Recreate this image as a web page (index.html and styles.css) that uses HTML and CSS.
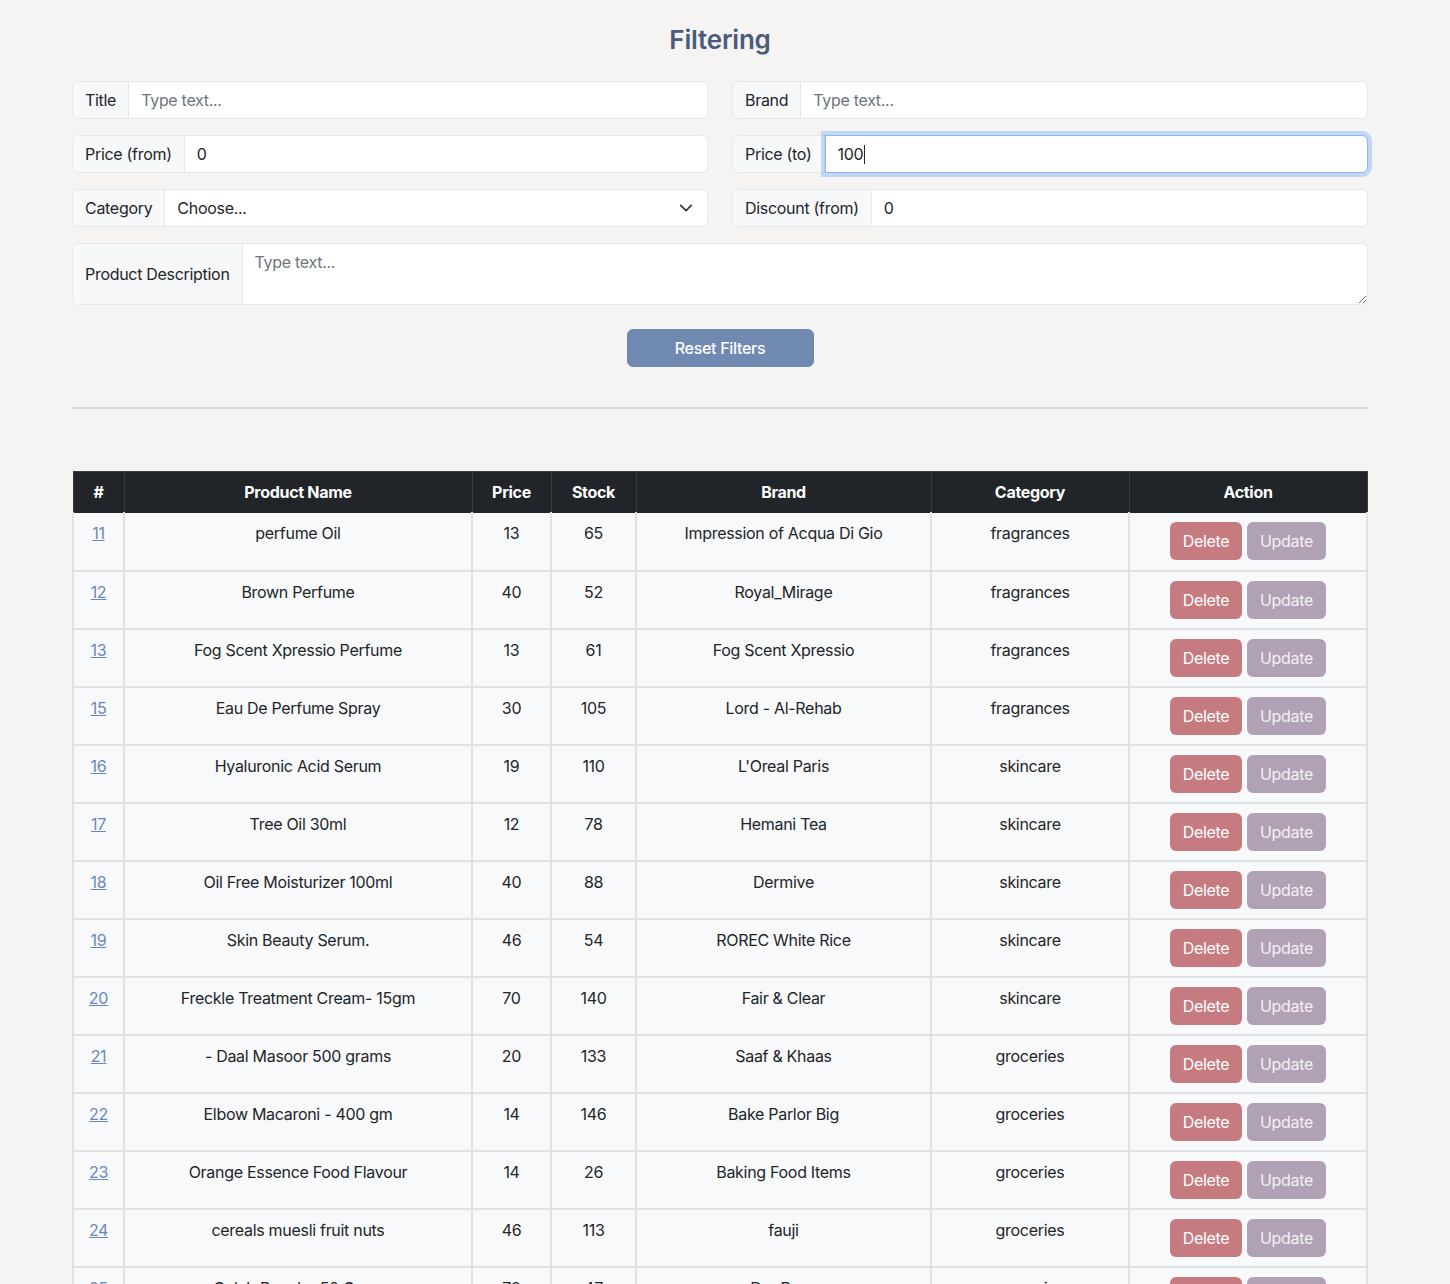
FILE: index.html
```html
<!DOCTYPE html>
<html lang="en">
<head>
<meta charset="utf-8">
<title>Filtering</title>
<link rel="stylesheet" href="styles.css">
</head>
<body>
<main class="page">
  <h1 class="title">Filtering</h1>
  <form class="filters">
    <div class="grid">
      <div class="group"><span class="label">Title</span><input class="field" type="text" placeholder="Type text..."></div>
      <div class="group"><span class="label">Brand</span><input class="field" type="text" placeholder="Type text..."></div>
      <div class="group"><span class="label">Price (from)</span><input class="field" type="text" value="0"></div>
      <div class="group"><span class="label">Price (to)</span><div class="field focus">100<span class="caret"></span></div></div>
      <div class="group"><span class="label">Category</span><div class="field select"><span>Choose...</span><svg class="chev" width="16" height="16" viewBox="0 0 16 16"><path d="M2 5l6 6 6-6" fill="none" stroke="#343a40" stroke-width="2" stroke-linecap="round" stroke-linejoin="round"/></svg></div></div>
      <div class="group"><span class="label">Discount (from)</span><input class="field" type="text" value="0"></div>
    </div>
    <div class="group tall"><span class="label">Product Description</span><textarea class="field area" placeholder="Type text..."></textarea></div>
    <div class="actions"><button type="button" class="reset">Reset Filters</button></div>
  </form>
  <hr class="sep">
  <table class="products">
    <colgroup>
      <col style="width:51px"><col style="width:348px"><col style="width:79px"><col style="width:85px"><col style="width:295px"><col style="width:198px"><col style="width:238px">
    </colgroup>
    <thead>
      <tr><th>#</th><th>Product Name</th><th>Price</th><th>Stock</th><th>Brand</th><th>Category</th><th>Action</th></tr>
    </thead>
    <tbody>
      <tr><td><a href="#">11</a></td><td>perfume Oil</td><td>13</td><td>65</td><td>Impression of Acqua Di Gio</td><td>fragrances</td><td class="act"><button class="del">Delete</button><button class="upd">Update</button></td></tr>
      <tr><td><a href="#">12</a></td><td>Brown Perfume</td><td>40</td><td>52</td><td>Royal_Mirage</td><td>fragrances</td><td class="act"><button class="del">Delete</button><button class="upd">Update</button></td></tr>
      <tr><td><a href="#">13</a></td><td>Fog Scent Xpressio Perfume</td><td>13</td><td>61</td><td>Fog Scent Xpressio</td><td>fragrances</td><td class="act"><button class="del">Delete</button><button class="upd">Update</button></td></tr>
      <tr><td><a href="#">15</a></td><td>Eau De Perfume Spray</td><td>30</td><td>105</td><td>Lord - Al-Rehab</td><td>fragrances</td><td class="act"><button class="del">Delete</button><button class="upd">Update</button></td></tr>
      <tr><td><a href="#">16</a></td><td>Hyaluronic Acid Serum</td><td>19</td><td>110</td><td>L'Oreal Paris</td><td>skincare</td><td class="act"><button class="del">Delete</button><button class="upd">Update</button></td></tr>
      <tr><td><a href="#">17</a></td><td>Tree Oil 30ml</td><td>12</td><td>78</td><td>Hemani Tea</td><td>skincare</td><td class="act"><button class="del">Delete</button><button class="upd">Update</button></td></tr>
      <tr><td><a href="#">18</a></td><td>Oil Free Moisturizer 100ml</td><td>40</td><td>88</td><td>Dermive</td><td>skincare</td><td class="act"><button class="del">Delete</button><button class="upd">Update</button></td></tr>
      <tr><td><a href="#">19</a></td><td>Skin Beauty Serum.</td><td>46</td><td>54</td><td>ROREC White Rice</td><td>skincare</td><td class="act"><button class="del">Delete</button><button class="upd">Update</button></td></tr>
      <tr><td><a href="#">20</a></td><td>Freckle Treatment Cream- 15gm</td><td>70</td><td>140</td><td>Fair &amp; Clear</td><td>skincare</td><td class="act"><button class="del">Delete</button><button class="upd">Update</button></td></tr>
      <tr><td><a href="#">21</a></td><td>- Daal Masoor 500 grams</td><td>20</td><td>133</td><td>Saaf &amp; Khaas</td><td>groceries</td><td class="act"><button class="del">Delete</button><button class="upd">Update</button></td></tr>
      <tr><td><a href="#">22</a></td><td>Elbow Macaroni - 400 gm</td><td>14</td><td>146</td><td>Bake Parlor Big</td><td>groceries</td><td class="act"><button class="del">Delete</button><button class="upd">Update</button></td></tr>
      <tr><td><a href="#">23</a></td><td>Orange Essence Food Flavour</td><td>14</td><td>26</td><td>Baking Food Items</td><td>groceries</td><td class="act"><button class="del">Delete</button><button class="upd">Update</button></td></tr>
      <tr><td><a href="#">24</a></td><td>cereals muesli fruit nuts</td><td>46</td><td>113</td><td>fauji</td><td>groceries</td><td class="act"><button class="del">Delete</button><button class="upd">Update</button></td></tr>
      <tr><td><a href="#">25</a></td><td>Gulab Powder 50 Gram</td><td>70</td><td>47</td><td>Dry Rose</td><td>groceries</td><td class="act"><button class="del">Delete</button><button class="upd">Update</button></td></tr>
    </tbody>
  </table>
</main>
</body>
</html>
```
FILE: styles.css
```css
* { box-sizing: border-box; }
html, body { margin: 0; padding: 0; }
body {
  background: #f5f4f2;
  font-family: Inter, "Liberation Sans", sans-serif;
  font-size: 16px;
  line-height: 24px;
  letter-spacing: -0.3px;
  color: #212529;
}
.page {
  width: 1296px;
  margin-left: 72px;
  padding-top: 22px;
}
.title {
  margin: 0 0 23px;
  text-align: center;
  font-size: 26px;
  line-height: 36px;
  font-weight: 600;
  letter-spacing: -0.2px;
  color: #4a5b7c;
}
.grid {
  display: grid;
  grid-template-columns: 636px 636px;
  column-gap: 24px;
  row-gap: 16px;
}
.group {
  display: flex;
  height: 38px;
  border: 1px solid #e6e8eb;
  border-radius: 6px;
  background: #fff;
}
.label {
  display: flex;
  align-items: center;
  padding: 0 12px;
  background: #f7f8fa;
  border-right: 1px solid #e6e8eb;
  border-radius: 5px 0 0 5px;
  white-space: nowrap;
  color: #212529;
}
.field {
  flex: 1;
  min-width: 0;
  border: 0;
  background: transparent;
  padding: 0 12px;
  font: inherit;
  letter-spacing: inherit;
  color: #212529;
  outline: none;
  border-radius: 0 5px 5px 0;
  display: flex;
  align-items: center;
}
.field::placeholder { color: #6c757d; }
.focus {
  position: relative;
  margin: -1px -1px -1px 0;
  border: 1px solid #86b7fe;
  border-radius: 0 6px 6px 0;
  box-shadow: 0 0 0 4px rgba(13, 110, 253, 0.22);
  background: #fff;
}
.caret {
  display: inline-block;
  width: 1px;
  height: 19px;
  background: #212529;
  margin-left: 1px;
}
.select { justify-content: space-between; padding-right: 14px; }
.chev { width: 14px; height: 14px; }
.tall {
  height: 62px;
  margin-top: 16px;
}
.area {
  resize: vertical;
  padding: 6px 12px;
  display: block;
  line-height: 24px;
}
.actions {
  display: flex;
  justify-content: center;
  margin-top: 24px;
}
.reset {
  width: 187px;
  height: 38px;
  border: 1px solid #6b87b1;
  border-radius: 6px;
  background: #6f89b1;
  color: #fff;
  font: inherit;
  letter-spacing: inherit;
  font-weight: 500;
}
.sep {
  margin: 40px 0 62px;
  border: 0;
  border-top: 2px solid #dcdcdc;
}
.products {
  width: 1294px;
  table-layout: fixed;
  border-collapse: collapse;
  text-align: center;
}
.products th {
  background: #212529;
  color: #fff;
  font-weight: 700;
  height: 41px;
  padding: 7px 8px;
  border: 1px solid #373b3e;
  border-bottom-color: #212529;
}
.products td {
  background: #f8f9fa;
  height: 58px;
  padding: 8px;
  vertical-align: top;
  border-style: solid;
  border-width: 0 2px 2px 2px;
  border-color: #dee2e6;
}
.products td + td { border-left-width: 1px; }
.products td a { color: #6a86bf; }
.act { white-space: nowrap; }
.act button {
  height: 38px;
  margin-top: 1px;
  border: 0;
  border-radius: 6px;
  font: inherit;
  letter-spacing: inherit;
  padding: 0 12px;
  color: #fff;
}
.del { width: 72px; background: #c67b80; }
.upd { width: 79px; margin-left: 5px; background: #b1a1b4; color: #f4f0f4 !important; }
```
